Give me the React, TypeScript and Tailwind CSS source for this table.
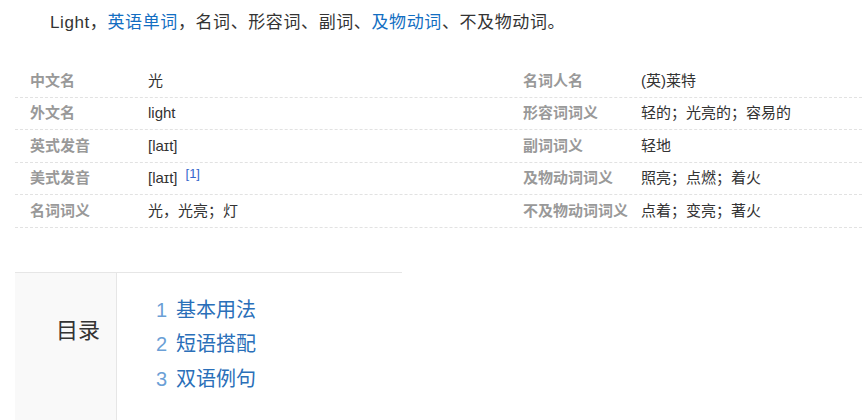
const font = '[font-family:"Liberation_Sans","Noto_Sans_CJK_SC",sans-serif]';

type Cell = { label: string; value: React.ReactNode };

const rows: [Cell, Cell][] = [
  [
    { label: '中文名', value: '光' },
    { label: '名词人名', value: '(英)莱特' },
  ],
  [
    { label: '外文名', value: 'light' },
    { label: '形容词词义', value: '轻的；光亮的；容易的' },
  ],
  [
    { label: '英式发音', value: '[laɪt]' },
    { label: '副词词义', value: '轻地' },
  ],
  [
    {
      label: '美式发音',
      value: (
        <>
          [laɪt]
          <sup className="ml-[8px] text-[13px] text-[#3366cc] relative -top-[5px]">[1]</sup>
        </>
      ),
    },
    { label: '及物动词词义', value: '照亮；点燃；着火' },
  ],
  [
    { label: '名词词义', value: '光，光亮；灯' },
    { label: '不及物动词词义', value: '点着；变亮；著火' },
  ],
];

const toc = ['基本用法', '短语搭配', '双语例句'];

export default function App() {
  return (
    <div className={`w-[865px] h-[420px] overflow-hidden bg-white text-[#333] ${font}`}>
      <div className="pt-[11px] pl-[50px] text-[17px] tracking-[0.6px] leading-[24px] whitespace-nowrap">
        Light，<span className="text-[#136ec2]">英语单词</span>，名词、形容词、副词、
        <span className="text-[#136ec2]">及物动词</span>、不及物动词。
      </div>

      <div className="mt-[30px] ml-[15px] w-[847px]">
        {rows.map((row, i) => (
          <div
            key={i}
            className="flex items-center h-[32.5px] border-b border-dashed border-[#e2e2e2] text-[15px] leading-[20px]"
          >
            <div className="w-[133px] pl-[15px] font-bold text-[#999] whitespace-nowrap">{row[0].label}</div>
            <div className="w-[375px]">{row[0].value}</div>
            <div className="w-[118px] font-bold text-[#999] whitespace-nowrap">{row[1].label}</div>
            <div className="flex-1">{row[1].value}</div>
          </div>
        ))}
      </div>

      <div className="mt-[44px] ml-[15px] w-[387px] h-[160px] flex border-t border-[#e6e6e6]">
        <div className="w-[102px] bg-[#f9f9f9] border-r border-[#e6e6e6] flex justify-end pr-[16px] pt-[45px]">
          <div className="text-[22px] leading-[26px] text-[#333]">目录</div>
        </div>
        <div className="pl-[39px] pt-[20px] flex flex-col">
          {toc.map((t, i) => (
            <div key={t} className="flex items-center h-[34.5px] text-[20px] leading-[24px] whitespace-nowrap">
              <span className="w-[20px] text-[#6b9fd6]">{i + 1}</span>
              <span className="text-[#2a6fb9]">{t}</span>
            </div>
          ))}
        </div>
      </div>
    </div>
  );
}
